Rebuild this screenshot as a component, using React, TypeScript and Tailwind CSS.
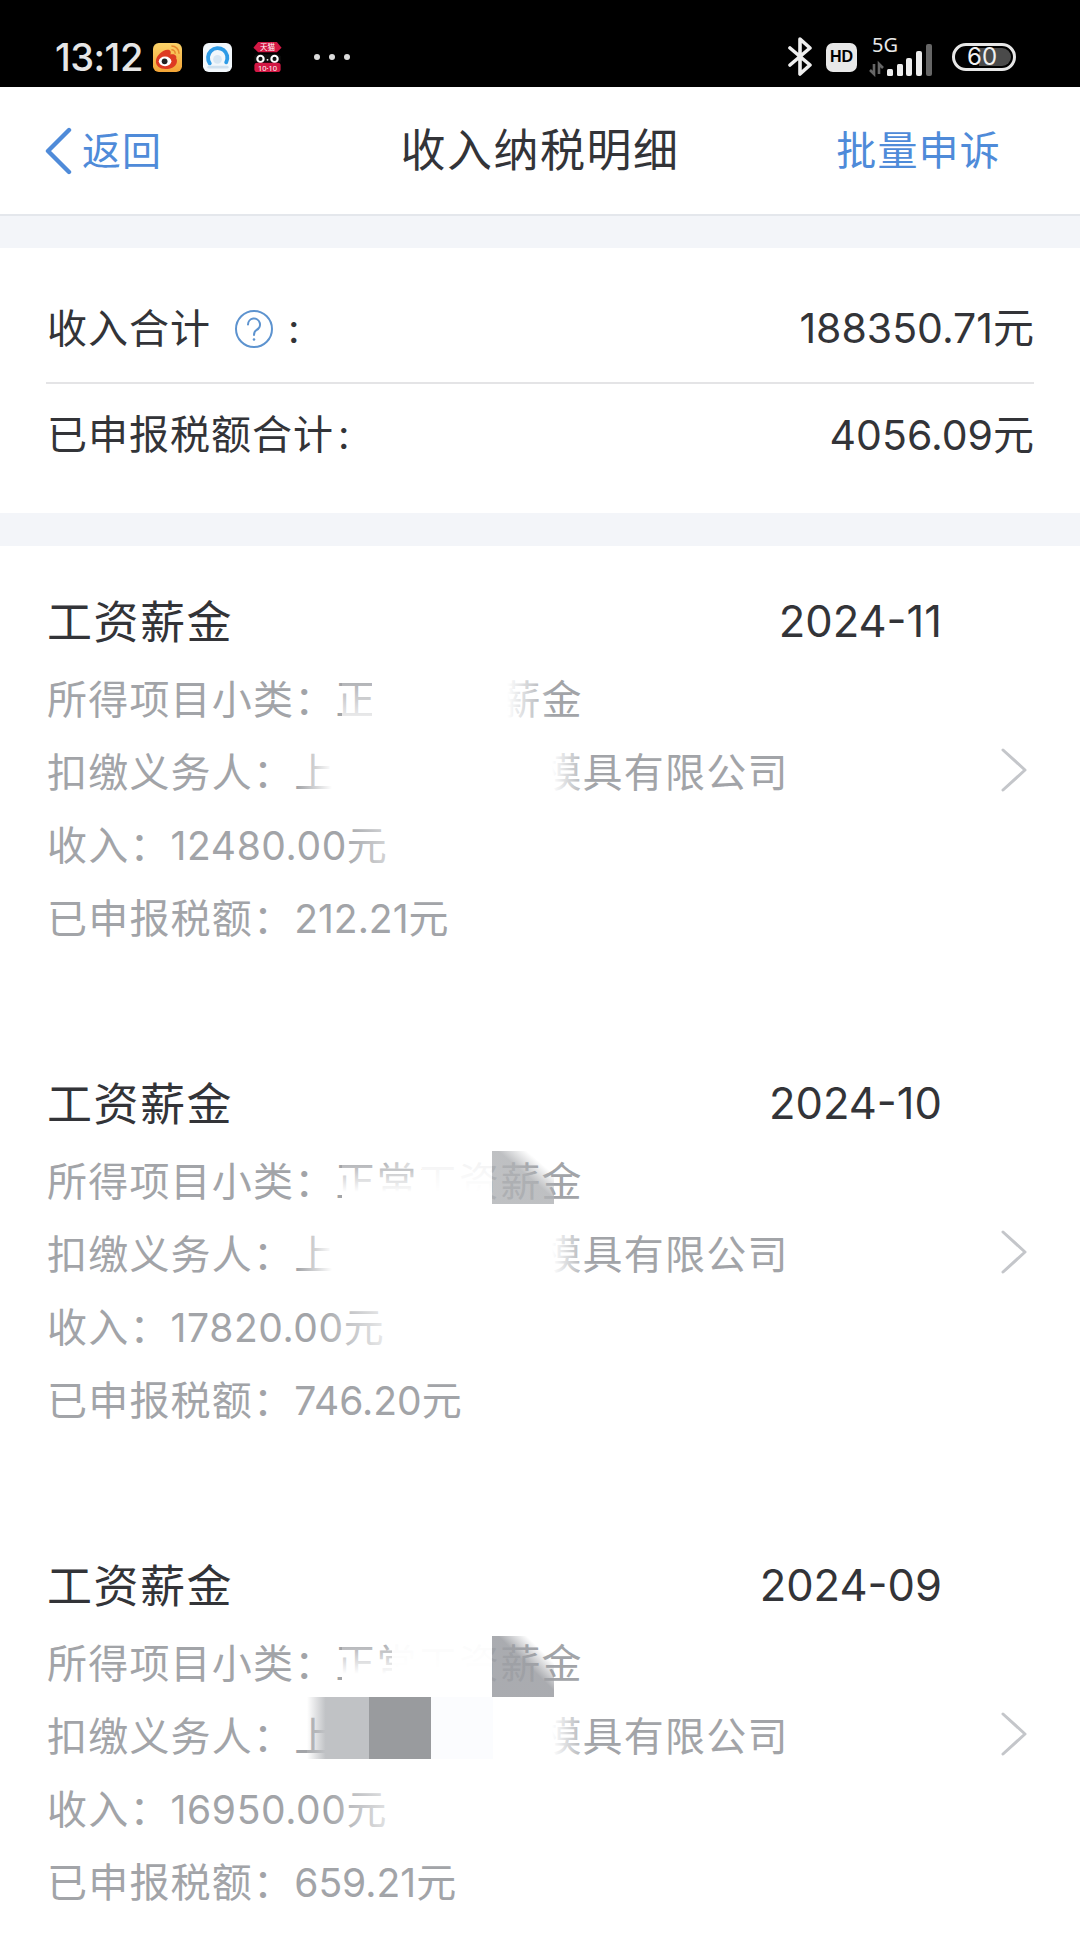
import React from "react";

const FONT = "font-['Inter','Noto_Sans_CJK_SC','Noto_Sans',sans-serif]";

function Fade({ className }: { className: string }) {
  return <div className={"absolute " + className} />;
}

function Row({ label, children, masks }: { label: string; children?: React.ReactNode; masks?: React.ReactNode }) {
  return (
    <div className="relative h-[73px] flex items-center text-[#a2a4a8] text-[40px] leading-none tracking-[1.2px] whitespace-nowrap">
      <span>{label}</span>
      {children}
      {masks}
    </div>
  );
}

function Money({ value, wide }: { value: string; wide?: boolean }) {
  return (
    <span className={wide ? "text-[39px] tracking-[0.6px]" : "text-[39px] tracking-[0px]"}>
      {value}
      <span className="text-[40px]">元</span>
    </span>
  );
}

type Item = {
  date: string;
  income: string;
  tax: string;
  masks1: React.ReactNode;
  masks2: React.ReactNode;
  masks3: React.ReactNode;
};

const plainSecondRow = (
  <>
    <Fade className="left-[250px] top-0 w-[35px] h-full bg-gradient-to-r from-transparent to-white" />
    <Fade className="left-[285px] top-0 w-[220px] h-full bg-white" />
    <Fade className="left-[505px] top-0 w-[38px] h-full bg-gradient-to-r from-white to-transparent" />
  </>
);

const items: Item[] = [
  {
    date: "2024-11",
    income: "12480.00",
    tax: "212.21",
    masks1: (
      <>
        <Fade className="left-[295px] top-[10px] w-[30px] h-[56px] bg-gradient-to-b from-transparent to-white" />
        <Fade className="left-[325px] top-0 w-[135px] h-full bg-white" />
        <Fade className="left-[460px] top-0 w-[45px] h-full bg-gradient-to-r from-white to-transparent" />
      </>
    ),
    masks2: plainSecondRow,
    masks3: <Fade className="left-[295px] top-0 w-[60px] h-full bg-gradient-to-r from-transparent to-white/70" />,
  },
  {
    date: "2024-10",
    income: "17820.00",
    tax: "746.20",
    masks1: (
      <>
        <Fade className="left-[295px] top-[12px] w-[150px] h-[50px] bg-gradient-to-b from-transparent to-white to-70%" />
        <Fade className="left-[335px] top-0 w-[40px] h-[24px] bg-gradient-to-r from-transparent to-white/80" />
        <Fade className="left-[375px] top-0 w-[70px] h-full bg-white/85" />
        <Fade className="left-[445px] top-[6px] w-[62px] h-[53px] bg-[linear-gradient(to_top_right,#b0b2b5d0_55%,transparent_78%)]" />
      </>
    ),
    masks2: plainSecondRow,
    masks3: <Fade className="left-[270px] top-0 w-[80px] h-full bg-gradient-to-r from-transparent to-white/90" />,
  },
  {
    date: "2024-09",
    income: "16950.00",
    tax: "659.21",
    masks1: (
      <>
        <Fade className="left-[295px] top-[12px] w-[150px] h-[50px] bg-gradient-to-b from-transparent to-white to-70%" />
        <Fade className="left-[345px] top-0 w-[100px] h-full bg-white/95" />
        <Fade className="left-[445px] top-[9px] w-[62px] h-[61px] bg-[linear-gradient(to_top_right,#9ea0a5e0_55%,transparent_78%)]" />
      </>
    ),
    masks2: (
      <>
        <Fade className="left-[260px] top-[-3px] w-[62px] h-[62px] bg-gradient-to-r from-white/10 to-[#c0c2c5] to-30%" />
        <Fade className="left-[322px] top-[-3px] w-[62px] h-[62px] bg-[#999b9e]" />
        <Fade className="left-[384px] top-[-3px] w-[62px] h-[62px] bg-[#fbfcfe]" />
        <Fade className="left-[446px] top-[-3px] w-[59px] h-[62px] bg-white" />
        <Fade className="left-[505px] top-[-3px] w-[38px] h-[62px] bg-gradient-to-r from-white to-transparent" />
      </>
    ),
    masks3: <Fade className="left-[280px] top-0 w-[80px] h-full bg-gradient-to-r from-transparent to-white/90" />,
  },
];

function Chevron() {
  return (
    <svg width="28" height="44" viewBox="0 0 28 44" fill="none" className="absolute right-[52px] top-[202px]">
      <path d="M3 2 L25 22 L3 42" stroke="#c4c6ca" strokeWidth="3" strokeLinecap="round" strokeLinejoin="round" />
    </svg>
  );
}

function Record({ item }: { item: Item }) {
  return (
    <div className="relative h-[482px] pl-[47px] pt-[44px] bg-white">
      <div className="flex items-center h-[64px] w-[895px] justify-between text-[#333438] text-[45px] leading-none">
        <span className="tracking-[1.5px]">工资薪金</span>
        <span className="text-[43.5px]">{item.date}</span>
      </div>
      <div className="mt-[9px]">
        <Row label="所得项目小类：" masks={item.masks1}><span>正常工资薪金</span></Row>
        <Row label="扣缴义务人：" masks={item.masks2}><span>上海精密科技模具有限公司</span></Row>
        <Row label="收入：" masks={item.masks3}><Money value={item.income} wide /></Row>
        <Row label="已申报税额："><Money value={item.tax} /></Row>
      </div>
      <Chevron />
    </div>
  );
}

function StatusBar() {
  return (
    <div className="h-[87px] bg-black flex items-center pt-[27px] pl-[55px] pr-[64px] text-[#e6e6e6]">
      <span className="w-[86px] text-[38px] leading-none font-medium tracking-[-0.5px]">13:12</span>
      <svg width="29" height="29" viewBox="0 0 30 30" className="ml-[12px]">
        <defs>
          <linearGradient id="wb" x1="0" y1="0" x2="0" y2="1">
            <stop offset="0" stopColor="#fbd36a" />
            <stop offset="1" stopColor="#f3a436" />
          </linearGradient>
        </defs>
        <rect width="30" height="30" rx="6" fill="url(#wb)" />
        <path d="M3 19 C3 13 10 7 15 7 C18 7 19 9 18 12 C22 11 25 13 24 16 C26 18 25 27 13 27 C7 27 3 24 3 19 Z" fill="#dd3a22" />
        <ellipse cx="12.5" cy="19" rx="6.5" ry="5" fill="#fff" />
        <circle cx="12" cy="19" r="3" fill="#222" />
        <path d="M19 3 A8 8 0 0 1 27 11 M19 7 A4 4 0 0 1 23 11" stroke="#e9892d" strokeWidth="1.6" fill="none" />
      </svg>
      <svg width="29" height="29" viewBox="0 0 30 30" className="ml-[21px]">
        <rect width="30" height="30" rx="6" fill="#f2f7fb" />
        <path d="M7 21 A10 10 0 1 1 24 20" fill="none" stroke="#2e9be6" strokeWidth="4" strokeLinecap="round" />
        <circle cx="15" cy="17" r="4.5" fill="#d6e6f3" />
        <path d="M6 25 H25" stroke="#cfe0ee" strokeWidth="3" strokeLinecap="round" />
      </svg>
      <svg width="29" height="30" viewBox="0 0 30 32" className="ml-[21px]">
        <path d="M0 6 L5 0 H25 L30 6 L25 11 H5 Z" fill="#d31844" />
        <text x="15" y="9" textAnchor="middle" fontSize="8" fill="#fff" fontFamily="Noto Sans CJK SC">天猫</text>
        <path d="M1 15 L4 13 H26 L29 15 V21 H1 Z" fill="#111" />
        <ellipse cx="7.5" cy="18" rx="4.5" ry="4.5" fill="#fff" />
        <ellipse cx="22.5" cy="18" rx="4.5" ry="4.5" fill="#fff" />
        <circle cx="7.5" cy="18" r="2.2" fill="#111" />
        <circle cx="22.5" cy="18" r="2.2" fill="#111" />
        <circle cx="15" cy="19" r="1" fill="#fff" />
        <rect x="1" y="22" width="28" height="10" rx="3" fill="#d31844" />
        <text x="15" y="30.5" textAnchor="middle" fontSize="8" fill="#fff" fontFamily="Noto Sans">10·10</text>
      </svg>
      <div className="ml-[32px] flex gap-[9px]">
        <span className="w-[6px] h-[6px] rounded-full bg-[#dcdcdc]" />
        <span className="w-[6px] h-[6px] rounded-full bg-[#dcdcdc]" />
        <span className="w-[6px] h-[6px] rounded-full bg-[#dcdcdc]" />
      </div>
      <div className="flex-1" />
      <svg width="26" height="40" viewBox="0 0 26 40">
        <path d="M2 11 L22 28 L12 37 V2 L22 11 L2 28" fill="none" stroke="#eee" strokeWidth="3.6" strokeLinejoin="round" strokeLinecap="round" />
      </svg>
      <div className="ml-[12px] w-[31px] h-[29px] rounded-[7px] bg-[#e8e8e8] flex items-center justify-center text-black text-[16px] font-black leading-none font-['Liberation_Sans',sans-serif]">HD</div>
      <div className="ml-[11px] relative w-[68px] h-[40px]">
        <span className="absolute left-[4px] top-[-2px] text-[20px] leading-none font-['Noto_Sans',sans-serif] text-[#e8e8e8]">5G</span>
        <svg width="68" height="40" viewBox="0 0 68 40" className="absolute left-0 top-0">
          <path d="M6 27 V37 L2 33 M11 37 V27 L15 31" stroke="#666" strokeWidth="2.6" fill="none" />
          <rect x="19" y="32" width="6" height="7" rx="1.5" fill="#eee" />
          <rect x="29" y="27" width="6" height="12" rx="1.5" fill="#eee" />
          <rect x="38" y="21" width="6" height="18" rx="2" fill="#eee" />
          <rect x="48" y="14" width="6" height="25" rx="2" fill="#eee" />
          <rect x="58" y="7" width="6" height="32" rx="2" fill="#666" />
        </svg>
      </div>
      <div className="ml-[16px] relative shrink-0 w-[64px] h-[28px] rounded-full border-[3px] border-[#e6e6e6] flex items-center overflow-hidden">
        <div className="absolute right-[2px] top-[2px] bottom-[2px] w-[32px] rounded-r-full bg-[#4a4a4a]" />
        <span className="relative ml-[12px] text-[24px] leading-none text-[#f0f0f0]">60</span>
      </div>
    </div>
  );
}

function NavBar() {
  return (
    <div className="relative h-[129px] bg-white border-b-[2px] border-[#e4e7ec] flex items-center justify-between pl-[44px] pr-[79px]">
      <div className="flex items-center text-[#4f8bd9] text-[39px] leading-none tracking-[1px]">
        <svg width="28" height="48" viewBox="0 0 28 48" fill="none" className="mr-[10px]">
          <path d="M25 3 L4 24 L25 45" stroke="#4f8bd9" strokeWidth="4.4" strokeLinecap="round" strokeLinejoin="round" />
        </svg>
        返回
      </div>
      <div className="absolute left-0 right-0 text-center text-[#333438] text-[45px] leading-none tracking-[1.5px]">收入纳税明细</div>
      <div className="relative text-[#4f8bd9] text-[40px] leading-none tracking-[1.2px]">批量申诉</div>
    </div>
  );
}

function Summary() {
  return (
    <div className="bg-white h-[265px] px-[46px] pt-[23px] text-[#333438] text-[40px] leading-none">
      <div className="flex items-center justify-between h-[113px] pt-[4px] border-b-[2px] border-[#e4e4e6]">
        <div className="flex items-center pl-[1px] tracking-[1px]">
          <span>收入合计</span>
          <svg width="40" height="40" viewBox="0 0 40 40" fill="none" className="ml-[23px]">
            <circle cx="20" cy="20" r="18" stroke="#5d93cf" strokeWidth="2" />
            <path d="M14 15.5 A6 6 0 1 1 22.5 21 Q20 22.5 20 26" stroke="#5d93cf" strokeWidth="2" strokeLinecap="round" />
            <circle cx="20" cy="30.5" r="1.3" fill="#5d93cf" />
          </svg>
          <span className="ml-[14px]">:</span>
        </div>
        <span className="text-[41px]">188350.71元</span>
      </div>
      <div className="flex items-center justify-between h-[100px] pt-[2px]">
        <span className="pl-[1px] tracking-[1px]">已申报税额合计<span className="ml-[4px]">:</span></span>
        <span className="text-[41px]">4056.09元</span>
      </div>
    </div>
  );
}

export default function App() {
  return (
    <div className={"w-[1080px] h-[1944px] overflow-hidden bg-white " + FONT}>
      <StatusBar />
      <NavBar />
      <div className="h-[32px] bg-[#f3f5f9]" />
      <Summary />
      <div className="h-[33px] bg-[#f3f5f9]" />
      {items.map((it) => (
        <Record key={it.date} item={it} />
      ))}
    </div>
  );
}
